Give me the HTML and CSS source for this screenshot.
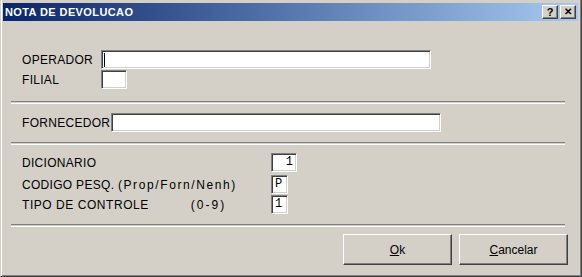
FILE: index.html
```html
<!DOCTYPE html>
<html lang="pt">
<head>
    <meta charset="UTF-8">
    <title>NOTA DE DEVOLUCAO</title>
    <link rel="stylesheet" href="styles.css">
</head>
<body>
    <div class="window">
        <div class="titlebar">
            <span class="title">NOTA DE DEVOLUCAO</span>
            <div class="tbtns">
                <span class="tbtn">?</span>
                <span class="tbtn close">&#x2715;</span>
            </div>
        </div>
        <div class="content">
            <div class="group g1">
                <div class="row">
                    <label class="lbl w80">OPERADOR</label>
                    <div class="field wide"><span class="caret"></span></div>
                </div>
                <div class="row">
                    <label class="lbl w80">FILIAL</label>
                    <div class="field small"></div>
                </div>
            </div>
            <div class="sep"></div>
            <div class="group g2">
                <div class="row">
                    <label class="lbl w89">FORNECEDOR</label>
                    <div class="field wide"></div>
                </div>
            </div>
            <div class="sep"></div>
            <div class="group g3">
                <div class="row r-dic">
                    <label class="lbl w249">DICIONARIO</label>
                    <div class="field num right">1</div>
                </div>
                <div class="row r-cod">
                    <label class="lbl w249">CODIGO PESQ. <span class="low">(Prop/Forn/Nenh)</span></label>
                    <div class="field one">P</div>
                </div>
                <div class="row r-tipo">
                    <label class="lbl w249"><span class="caps">TIPO DE CONTROLE</span><span class="low range">(0-9)</span></label>
                    <div class="field one">1</div>
                </div>
            </div>
            <div class="sep"></div>
            <div class="buttons">
                <button class="btn"><u>O</u>k</button>
                <button class="btn"><u>C</u>ancelar</button>
            </div>
        </div>
    </div>
</body>
</html>
```

FILE: styles.css
```css
body{
    margin:0;
    padding:0;
    background:#d4d0c8;
}
.window{
    width:582px;
    height:277px;
    box-sizing:border-box;
    background:#d4d0c8;
    border-left:1px solid #d4d0c8;
    border-right:1px solid #404040;
    border-bottom:1px solid #404040;
    box-shadow:inset 1px 0 0 #fff, inset -1px -1px 0 #808080;
    padding:3px 3px 0 2px;
    font-family:"Liberation Sans", Arial, sans-serif;
    font-size:11px;
    color:#000;
    overflow:hidden;
}
.titlebar{
    height:18px;
    display:flex;
    align-items:center;
    justify-content:space-between;
    background:linear-gradient(90deg,#0a246a,#a6caf0);
    padding:0 2px 0 2px;
}
.title{
    color:#fff;
    font-weight:bold;
    font-size:11px;
    letter-spacing:0.4px;
}
.tbtns{
    display:flex;
    gap:2px;
}
.tbtn{
    width:16px;
    height:14px;
    box-sizing:border-box;
    background:#d4d0c8;
    border:1px solid;
    border-color:#fff #404040 #404040 #fff;
    box-shadow:inset -1px -1px 0 #808080;
    font-weight:bold;
    font-size:11px;
    line-height:12px;
    text-align:center;
}
.tbtn.close{
    font-size:10px;
}
.content{
    padding:0 13px 0 8px;
}
.group{
    padding-left:11px;
}
.g1{
    padding-top:29px;
    padding-bottom:11px;
}
.g2{
    padding-top:9px;
    padding-bottom:9px;
}
.g3{
    padding-top:8px;
    padding-bottom:9px;
}
.row{
    display:flex;
    align-items:center;
    margin-bottom:1px;
}
.r-dic{
    margin-bottom:3px;
}
.lbl{
    flex:none;
    font-size:12px;
    letter-spacing:0.3px;
    white-space:pre;
}
.caps{
    letter-spacing:0.55px;
}
.low{
    letter-spacing:1.6px;
}
.w80{width:79px;}
.w89{width:89px;}
.w249{width:249px;}
.range{
    margin-left:42px;
    letter-spacing:2px;
}
.field{
    box-sizing:border-box;
    height:19px;
    background:#fff;
    border:1px solid;
    border-color:#808080 #fff #fff #808080;
    box-shadow:inset 1px 1px 0 #404040, inset -1px -1px 0 #d4d0c8;
    font-family:"Liberation Mono", "Courier New", monospace;
    font-size:12px;
    line-height:17px;
    padding:0 3px;
    position:relative;
}
.wide{width:330px;}
.small{width:26px;}
.num{width:26px;text-align:right;}
.one{width:17px;}
.caret{
    position:absolute;
    left:2px;
    top:2px;
    width:1px;
    height:14px;
    background:#000;
}
.sep{
    height:1px;
    border-top:1px solid #808080;
    border-bottom:1px solid #fff;
}
.buttons{
    display:flex;
    justify-content:flex-end;
    gap:7px;
    padding-top:7px;
    margin-right:-3px;
}
.btn{
    width:109px;
    height:31px;
    background:#d4d0c8;
    border:1px solid;
    border-color:#fff #404040 #404040 #fff;
    box-shadow:inset -1px -1px 0 #808080;
    font-family:"Liberation Sans", Arial, sans-serif;
    font-size:12px;
    color:#000;
    padding:0;
}
```
